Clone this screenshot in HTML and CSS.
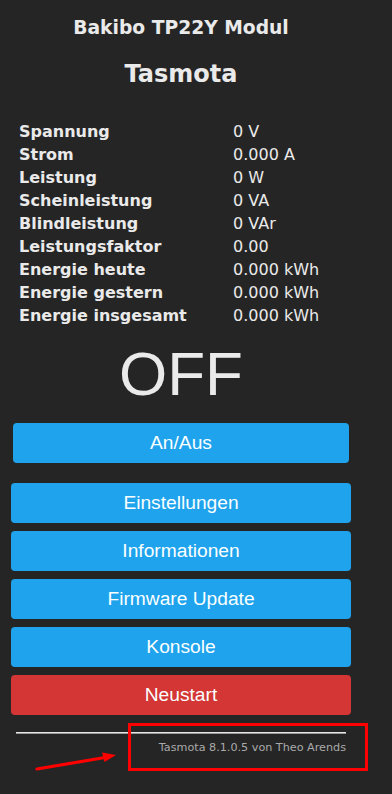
FILE: index.html
```html
<!DOCTYPE html>
<html lang="de">
<head>
<meta charset="utf-8">
<title>Bakibo TP22Y Modul - Tasmota</title>
<link rel="stylesheet" href="styles.css">
</head>
<body>
<div class="wrap">
  <div class="head">
    <h3 class="module">Bakibo TP22Y Modul</h3>
    <h2 class="title">Tasmota</h2>
  </div>
  <div class="sensors">
    <div class="lbl">Spannung</div><div class="val">0 V</div>
    <div class="lbl">Strom</div><div class="val">0.000 A</div>
    <div class="lbl">Leistung</div><div class="val">0 W</div>
    <div class="lbl">Scheinleistung</div><div class="val">0 VA</div>
    <div class="lbl">Blindleistung</div><div class="val">0 VAr</div>
    <div class="lbl">Leistungsfaktor</div><div class="val">0.00</div>
    <div class="lbl">Energie heute</div><div class="val">0.000 kWh</div>
    <div class="lbl">Energie gestern</div><div class="val">0.000 kWh</div>
    <div class="lbl">Energie insgesamt</div><div class="val">0.000 kWh</div>
  </div>
  <div class="state">OFF</div>
  <div class="toggle-row"><button class="btn">An/Aus</button></div>
  <div class="menu">
    <button class="btn">Einstellungen</button>
    <button class="btn">Informationen</button>
    <button class="btn">Firmware Update</button>
    <button class="btn">Konsole</button>
    <button class="btn btn-red">Neustart</button>
  </div>
  <div class="footer">
    <hr class="rule">
    <div class="credit">Tasmota 8.1.0.5 von Theo Arends</div>
  </div>
</div>
<div class="mark-box"></div>
<svg class="mark-arrow" width="392" height="794" viewBox="0 0 392 794">
  <line x1="37" y1="769" x2="105" y2="757.5" stroke="#ff0000" stroke-width="3.2" stroke-linecap="round"/>
  <polygon points="116,755 102,752.5 104.5,762" fill="#ff0000"/>
</svg>
</body>
</html>
```
FILE: styles.css
```css
html, body {
  margin: 0;
  padding: 0;
  background: #252525;
}
body {
  position: relative;
  width: 392px;
  height: 794px;
  overflow: hidden;
  color: #eaeaea;
  font-family: "DejaVu Sans", Verdana, sans-serif;
}
.wrap {
  width: 340px;
  margin-left: 11px;
}
.head {
  text-align: center;
}
.module {
  margin: 0;
  padding-top: 17px;
  font-size: 18.72px;
  line-height: 22px;
  font-weight: bold;
}
.title {
  margin: 0;
  padding-top: 21px;
  font-size: 24px;
  line-height: 28px;
  font-weight: bold;
}
.sensors {
  display: grid;
  grid-template-columns: 214px 1fr;
  padding-left: 8px;
  margin-top: 32px;
  font-size: 16px;
  line-height: 23px;
}
.lbl {
  font-weight: bold;
}
.val {
  font-weight: normal;
}
.state {
  margin-top: 11px;
  text-align: center;
  font-family: "Liberation Sans", Arial, sans-serif;
  font-size: 62px;
  line-height: 72px;
}
.toggle-row {
  margin-top: 13px;
  padding: 0 2px;
}
.btn {
  display: block;
  width: 100%;
  height: 40px;
  border: 0;
  border-radius: 4px;
  background: #1fa3ec;
  color: #faffff;
  font-family: "Liberation Sans", Arial, sans-serif;
  font-size: 19.2px;
  line-height: 40px;
  padding: 0;
  text-align: center;
}
.menu {
  margin-top: 20px;
  display: flex;
  flex-direction: column;
  gap: 8px;
}
.btn-red {
  background: #d43535;
}
.footer {
  margin-top: 17px;
  text-align: right;
}
.rule {
  margin: 0 5px;
  height: 0;
  border: 0;
  border-top: 1px solid #e6e6e6;
  border-bottom: 1px solid #9a9a9a;
}
.credit {
  padding-right: 5px;
  margin-top: 7px;
  font-size: 11.2px;
  line-height: 14px;
  color: #aaaaaa;
}
.mark-box {
  position: absolute;
  left: 128px;
  top: 723px;
  width: 234px;
  height: 42px;
  border: 3px solid #ff0000;
}
.mark-arrow {
  position: absolute;
  left: 0;
  top: 0;
  pointer-events: none;
}
```
